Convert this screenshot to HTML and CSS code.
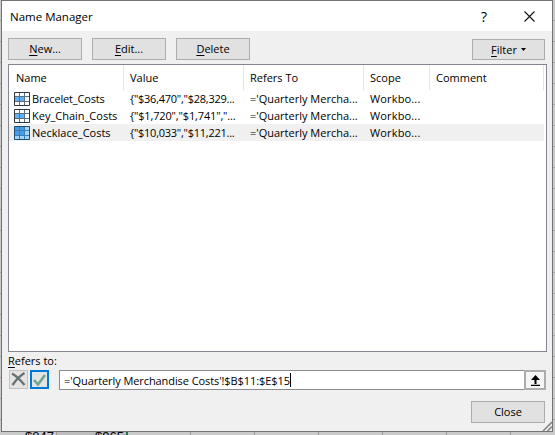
FILE: index.html
```html
<!DOCTYPE html>
<html lang="en">
<head>
<meta charset="utf-8">
<title>Name Manager</title>
<link rel="stylesheet" href="styles.css">
</head>
<body>
<svg width="0" height="0" class="defs">
  <symbol id="range" viewBox="0 0 16 14">
    <path fill="#fff" d="M0 0h16v14H0z"/>
    <path fill="#62b0f5" d="M1 4h9.5v6H1z"/>
    <path fill="none" stroke="#587082" d="M5.5 1v12M10.5 1v12M1 4.5h14M1 9.5h14"/>
    <path fill="none" stroke="#2b3840" d="M.5.5h15v13H.5z"/>
  </symbol>
  <symbol id="range-lit" viewBox="0 0 16 14">
    <path fill="#a5d4fb" d="M0 0h16v14H0z"/>
    <path fill="#459de8" d="M1 1h9.5v8.5H1z"/>
    <path fill="none" stroke="#3c7db3" d="M5.5 1v12M10.5 1v12M1 4.5h14M1 9.5h14"/>
    <path fill="none" stroke="#24506f" d="M.5.5h15v13H.5z"/>
  </symbol>
</svg>
<div class="sheet">
  <div class="dialog">
    <header class="title"><span class="name">Name Manager</span><span class="help">?</span>
      <svg class="x" width="11" height="11" viewBox="0 0 11 11"><path d="M.5.5l10 10M10.5.5l-10 10" stroke="#111" stroke-width="1.1"/></svg>
    </header>
    <main class="body">
      <div class="tools">
        <button><span><u>N</u>ew...</span></button><button><span><u>E</u>dit...</span></button><button><span><u>D</u>elete</span></button>
        <button class="filter"><span><u>F</u>ilter</span><svg width="5" height="3"><path d="M0 0h5L2.5 3z"/></svg></button>
      </div>
      <div class="list">
        <div class="row head"><span>Name</span><span>Value</span><span>Refers To</span><span>Scope</span><span>Comment</span></div>
        <div class="row"><span><svg width="16" height="14"><use href="#range"/></svg><b class="snug">Bracelet_Costs</b></span><span class="tight">{"$36,470","$28,329...</span><span>='Quarterly Mercha...</span><span class="wide">Workbo...</span><span></span></div>
        <div class="row"><span><svg width="16" height="14"><use href="#range"/></svg><b>Key_Chain_Costs</b></span><span class="snug">{"$1,720","$1,741","...</span><span>='Quarterly Mercha...</span><span class="wide">Workbo...</span><span></span></div>
        <div class="row sel"><span><svg width="16" height="14"><use href="#range-lit"/></svg><b>Necklace_Costs</b></span><span class="tight">{"$10,033","$11,221...</span><span>='Quarterly Mercha...</span><span class="wide">Workbo...</span><span></span></div>
      </div>
      <div class="label"><u>R</u>efers to:</div>
      <div class="editor">
        <div class="mini"><svg width="17" height="17"><path d="M2 2.5Q8 6 14.5 14M14.5 2Q8 6 2.5 14" fill="none" stroke="#667270" stroke-width="2.3"/></svg></div>
        <div class="mini accept"><svg width="15" height="15"><path d="M2 8l4 4.5L13 3" fill="none" stroke="#72a58d" stroke-width="2.6"/></svg></div>
        <div class="field"><span class="formula">='Quarterly Merchandise Costs'!$B$11:$E$15</span><i></i>
          <div class="pick"><svg width="9" height="11"><path d="M4.5 0L9 5H5.5v4h-2V5H0zM0 9.7h9V11H0z"/></svg></div>
        </div>
      </div>
      <button class="close"><span>Close</span></button>
    </main>
    <svg class="grip" width="10" height="10"><path d="M1 10L10 1M5.500 10L10 5.500" stroke="#888" stroke-width="1.7"/></svg>
  </div>
  <div class="cells"><span>$847</span><span class="green">$965</span><span></span><span></span><span></span><span></span><span></span><span></span></div>
</div>
</body>
</html>
```
FILE: styles.css
```css
* { box-sizing: border-box; }
body { margin: 0; overflow: hidden; font: 11px/17px "Open Sans", "Noto Sans", sans-serif; color: #000; }
svg { display: block; flex: none; }
.defs { position: absolute; }
u { text-decoration: underline; text-underline-offset: 2px; text-decoration-thickness: 1px; text-decoration-skip-ink: none; }
b { font-weight: 400; }
.sheet { width: 555px; height: 435px; background: repeating-linear-gradient(#cacaca 0 20px, #a5a5a5 20px 21px); overflow: hidden; padding-left: 1px; }
.dialog { position: relative; width: 552px; height: 432px; background: #f0f0f0; border: 1px solid #747474; }
.title { height: 30px; background: #fff; display: flex; align-items: center; padding: 0 17px 0 8px; }
.name { font-size: 11.5px; white-space: nowrap; }
.help { margin-left: auto; width: 10px; font-size: 14px; text-align: center; }
.x { margin-left: 35px; }
.body { padding: 7px 5px 0 6px; display: flex; flex-direction: column; }
.tools { display: flex; gap: 10px; height: 26px; }
button { width: 74px; height: 22px; padding: 0; margin: 0; border: 1px solid #adadad; background: #e1e1e1; color: #000; font: inherit; line-height: 18px; display: flex; align-items: center; justify-content: center; }
.filter { margin-left: auto; margin-right: 2px; margin-top: 1px; width: 73px; height: 21px; gap: 4px; }
.list { height: 288px; border: 1px solid #828790; background: #fff; }
.row { display: grid; grid-template-columns: 115px 120px 120px 66px 114px; height: 17px; align-items: center; white-space: nowrap; margin-right: 2px; }
.row span { padding-left: 6px; display: flex; align-items: center; }
.row span:first-child { padding-left: 5px; gap: 2px; }
.head { height: 25px; }
.head span, .head span:first-child { height: 25px; border-right: 1px solid #e5e5e5; padding-left: 6px; }
.head span:first-child { padding-left: 7px; }
.tight { letter-spacing: -.25px; }
.snug { letter-spacing: -.15px; }
.wide { letter-spacing: .15px; }
.sel { background: #f0f0f0; }
.label { height: 18px; line-height: 17px; }
.editor { display: flex; height: 20px; }
.mini { width: 19px; height: 19px; margin-left: 1px; border: 1px solid #c2c2c2; background: #e4e4e4; }
.accept { border: 2px solid #0078d7; margin-left: 2px; }
.field { display: flex; align-items: center; width: 487px; margin-left: 10px; height: 20px; border: 1px solid #8c8c8c; background: #fff; padding-left: 4px; white-space: nowrap; }
.formula { letter-spacing: -.08px; }
.field i { width: 1px; height: 14px; background: #000; }
.pick { margin: -1px -1px -1px auto; width: 22px; height: 20px; border: 2px solid #adadad; display: flex; align-items: center; justify-content: center; background: #f5f5f5; }
.close { align-self: flex-end; margin: 11px 2px 0 0; }
.grip { position: absolute; right: 0; bottom: 0; }
.cells { display: grid; grid-template-columns: 56px 71px 63px repeat(5, 64px); height: 3px; overflow: hidden; background: #cacaca; font: 13px/10px "Liberation Sans", sans-serif; text-align: right; }
.cells span { border-right: 1px solid #999; padding-right: 2px; }
.cells .green { border-right: 2px solid #217346; background: #bdbdbd; }
```
